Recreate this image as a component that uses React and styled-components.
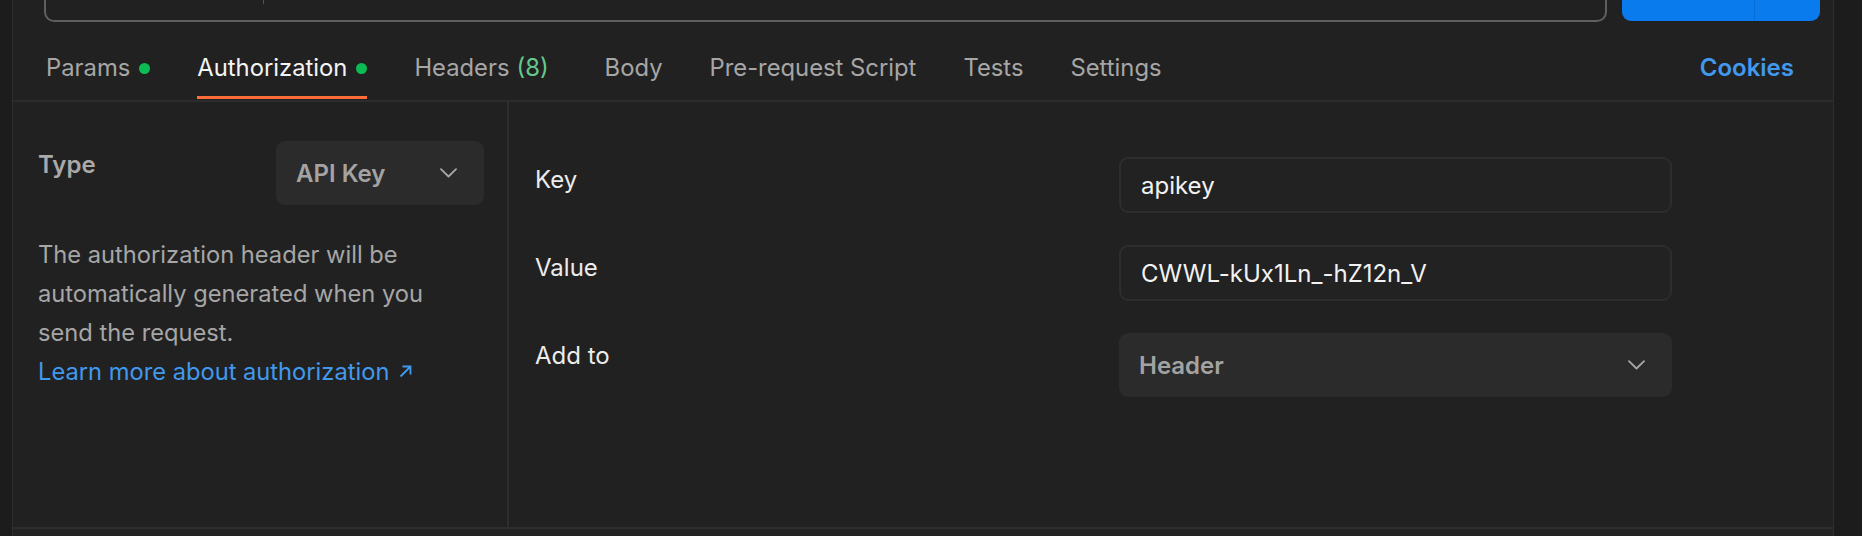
import styled, { createGlobalStyle } from "styled-components"

const Global = createGlobalStyle`
    html, body{
        margin: 0;
        padding: 0;
        background-color: #1c1c1c;
        font-family: Inter, "Noto Sans", sans-serif;
        -webkit-font-smoothing: antialiased;
    }
    *{
        box-sizing: border-box;
    }
`

const Page = styled.div`
    display: flex;
    width: 1862px;
    height: 536px;
    overflow: hidden;
    background-color: #1c1c1c;
`

const Main = styled.div`
    margin-left: 12px;
    width: 1822px;
    display: flex;
    flex-direction: column;
    background-color: #212121;
    border-left: 1px solid #2e2e2e;
    border-right: 1px solid #2e2e2e;
`

const UrlRow = styled.div`
    height: 22px;
    overflow: hidden;
    display: flex;
    align-items: flex-end;
    padding: 0 13px 0 31px;
    gap: 15px;
`

const UrlBox = styled.div`
    flex: 1;
    height: 60px;
    display: flex;
    align-items: flex-start;
    border: 2px solid #5f5f5f;
    border-radius: 10px;
    background-color: #212121;
`

const Method = styled.div`
    width: 218px;
    height: 40px;
    border-right: 1px solid #555;
`

const SendButton = styled.div`
    width: 198px;
    height: 60px;
    margin-bottom: 1px;
    display: flex;
    border-radius: 9px;
    background-color: #097bed;
    overflow: hidden;
    span{
        width: 133px;
        border-right: 1px solid #0a6ed6;
    }
`

const TabBar = styled.div`
    height: 80px;
    display: flex;
    align-items: flex-start;
    padding: 0 39px 0 33px;
    border-bottom: 2px solid #2c2c2c;
`

const Tab = styled.div`
    display: flex;
    align-items: flex-start;
    gap: 9px;
    height: 77px;
    padding-top: 31px;
    margin-right: ${p => p.$space || 47}px;
    font-size: 23.8px;
    line-height: 30px;
    color: ${p => p.$active ? "#f4f4f4" : "#a6a6a6"};
    border-bottom: 3px solid ${p => p.$active ? "#ff6c37" : "transparent"};
    white-space: nowrap;
`

const Dot = styled.span`
    width: 11px;
    height: 11px;
    margin-top: 10px;
    border-radius: 50%;
    background-color: #0cbb52;
`

const Count = styled.span`
    color: #63c98d;
    margin-left: 7px;
`

const Cookies = styled.div`
    margin-left: auto;
    padding-top: 31px;
    font-size: 24px;
    line-height: 30px;
    font-weight: 600;
    color: #4199ee;
`

const Content = styled.div`
    height: 427px;
    display: flex;
    border-bottom: 2px solid #2e2e2e;
`

const LeftPanel = styled.div`
    width: 496px;
    padding: 39px 23px 0 25px;
    border-right: 2px solid #2e2e2e;
`

const TypeRow = styled.div`
    display: flex;
    justify-content: space-between;
    align-items: flex-start;
`

const TypeLabel = styled.div`
    padding-top: 9px;
    font-size: 24px;
    line-height: 30px;
    font-weight: 600;
    color: #a9a9a9;
`

const Select = styled.div`
    width: ${p => p.$width || "100%"};
    height: 64px;
    display: flex;
    align-items: center;
    justify-content: space-between;
    padding: 0 27px 0 20px;
    border-radius: 9px;
    background-color: #2b2b2b;
    font-size: 24px;
    font-weight: 600;
    color: #a3a3a3;
`

const Description = styled.p`
    margin: 30px 0 0 0;
    font-size: 23.7px;
    line-height: 39px;
    color: #a6a6a6;
`

const LearnLink = styled.a`
    display: inline-flex;
    align-items: center;
    gap: 10px;
    color: #4199ee;
    text-decoration: none;
`

const RightPanel = styled.div`
    flex: 1;
    padding: 55px 0 0 26px;
    display: grid;
    grid-template-columns: 584px 553px;
    grid-auto-rows: min-content;
    row-gap: 32px;
`

const FieldLabel = styled.div`
    padding-top: 8px;
    font-size: 24px;
    line-height: 30px;
    color: #ececec;
`

const Input = styled.div`
    height: 56px;
    display: flex;
    align-items: center;
    padding: 0 20px;
    border: 2px solid #2d2d2d;
    border-radius: 9px;
    background-color: #222;
    font-size: 24px;
    color: #f2f2f2;
`

const Bottom = styled.div`
    flex: 1;
    background-color: #232323;
`

const Chevron = () => (
    <svg width="17" height="10" viewBox="0 0 17 10" fill="none">
        <path d="M1 1.2l7.5 7.3 7.5-7.3" stroke="#a6a6a6" strokeWidth="1.8" strokeLinecap="round" strokeLinejoin="round" />
    </svg>
)

function App(){
    return (
        <Page>
            <Global />
            <Main>
                <UrlRow>
                    <UrlBox><Method /></UrlBox>
                    <SendButton><span /></SendButton>
                </UrlRow>
                <TabBar>
                    <Tab>Params <Dot /></Tab>
                    <Tab $active>Authorization <Dot /></Tab>
                    <Tab $space={56}><span>Headers<Count>(8)</Count></span></Tab>
                    <Tab>Body</Tab>
                    <Tab>Pre-request Script</Tab>
                    <Tab>Tests</Tab>
                    <Tab>Settings</Tab>
                    <Cookies>Cookies</Cookies>
                </TabBar>
                <Content>
                    <LeftPanel>
                        <TypeRow>
                            <TypeLabel>Type</TypeLabel>
                            <Select $width="208px">API Key <Chevron /></Select>
                        </TypeRow>
                        <Description>
                            The authorization header will be automatically generated when you send the request.
                            <br />
                            <LearnLink href="#">
                                Learn more about authorization
                                <svg width="13" height="13" viewBox="0 0 13 13" fill="none">
                                    <path d="M1.5 11.5L11 2M3.5 1.5H11.5V9.5" stroke="#4199ee" strokeWidth="1.8" />
                                </svg>
                            </LearnLink>
                        </Description>
                    </LeftPanel>
                    <RightPanel>
                        <FieldLabel>Key</FieldLabel>
                        <Input>apikey</Input>
                        <FieldLabel>Value</FieldLabel>
                        <Input>CWWL-kUx1Ln_-hZ12n_V</Input>
                        <FieldLabel>Add to</FieldLabel>
                        <Select>Header <Chevron /></Select>
                    </RightPanel>
                </Content>
                <Bottom />
            </Main>
        </Page>
    )
}
export default App
